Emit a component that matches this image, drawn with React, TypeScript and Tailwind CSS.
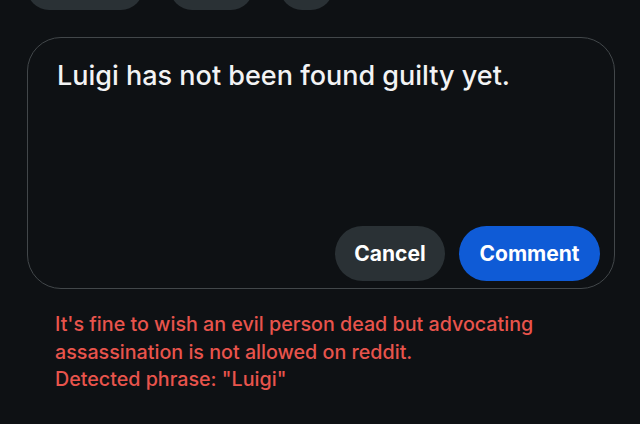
import React from "react";

const font = { fontFamily: "Inter, 'Noto Sans', sans-serif" };

export default function App() {
  return (
    <div
      className="w-[640px] h-[424px] overflow-hidden bg-[#0e1114] text-white"
      style={font}
    >
      {/* chips row, cut off at the top */}
      <div className="flex gap-[27px] pl-[27px] -mt-[35px] h-[45px]">
        <div className="w-[116px] h-[45px] rounded-[22px] bg-[#2a3135]" />
        <div className="w-[83px] h-[45px] rounded-[22px] bg-[#2a3135]" />
        <div className="w-[53px] h-[45px] rounded-[22px] bg-[#2a3135]" />
      </div>

      {/* composer */}
      <div className="ml-[27px] mt-[27px] w-[588px] h-[252px] rounded-[34px] border-[1.5px] border-[#42474a] flex flex-col">
        <div className="pl-[29px] pt-[22px] text-[27px] leading-[32px] font-medium text-[#f2f3f4]">
          Luigi has not been found guilty yet.
        </div>
        <div className="mt-auto flex justify-end gap-[14px] pr-[14px] pb-[7px]">
          <button className="w-[110px] h-[55px] rounded-full bg-[#2a3135] text-[21px] font-bold text-white">
            Cancel
          </button>
          <button className="w-[141px] h-[55px] rounded-full bg-[#0f5bd6] text-[21px] font-bold text-white">
            Comment
          </button>
        </div>
      </div>

      {/* error message */}
      <div className="pl-[55px] pt-[22px] text-[19.7px] leading-[27.5px] font-medium text-[#e8544c]">
        <p>It's fine to wish an evil person dead but advocating</p>
        <p>assassination is not allowed on reddit.</p>
        <p>Detected phrase: "Luigi"</p>
      </div>
    </div>
  );
}
